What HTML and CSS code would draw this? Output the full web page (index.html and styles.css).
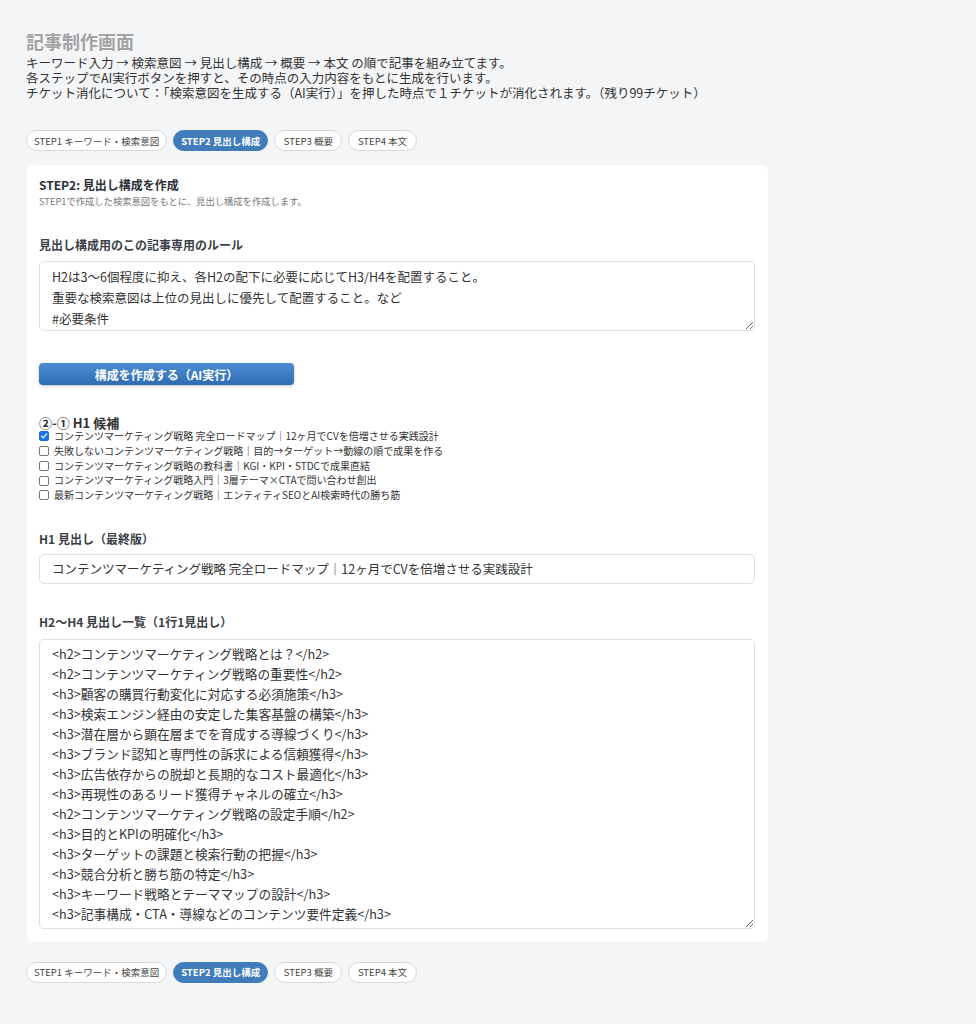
FILE: index.html
```html
<!DOCTYPE html>
<html lang="ja">
<head>
<meta charset="utf-8">
<title>記事制作画面</title>
<link rel="stylesheet" href="styles.css">
</head>
<body>
<div class="page">
  <h1 class="title">記事制作画面</h1>
  <div class="desc">
    <p>キーワード入力 → 検索意図 → 見出し構成 → 概要 → 本文 の順で記事を組み立てます。</p>
    <p>各ステップでAI実行ボタンを押すと、その時点の入力内容をもとに生成を行います。</p>
    <p>チケット消化について：「検索意図を生成する（AI実行）」を押した時点で１チケットが消化されます。（残り99チケット）</p>
  </div>

  <nav class="tabs tabs-top">
    <span class="tab">STEP1 キーワード・検索意図</span>
    <span class="tab active">STEP2 見出し構成</span>
    <span class="tab">STEP3 概要</span>
    <span class="tab">STEP4 本文</span>
  </nav>

  <section class="card">
    <h2 class="card-title">STEP2: 見出し構成を作成</h2>
    <p class="card-sub">STEP1で作成した検索意図をもとに、見出し構成を作成します。</p>

    <label class="label label-rules">見出し構成用のこの記事専用のルール</label>
    <textarea class="ta ta-rules">H2は3〜6個程度に抑え、各H2の配下に必要に応じてH3/H4を配置すること。
重要な検索意図は上位の見出しに優先して配置すること。など
#必要条件
・見出しには必ずキーワードを自然な形で含めること。
・読者の検索意図に沿った順序で構成すること。</textarea>

    <button class="btn">構成を作成する（AI実行）</button>

    <h3 class="cand-title">②-① H1 候補</h3>
    <ul class="cands">
      <li><span class="cb checked"><svg viewBox="0 0 10 10" width="8" height="8"><path d="M1.8 5.2 L4 7.4 L8.3 2.4" fill="none" stroke="#fff" stroke-width="1.6" stroke-linecap="round" stroke-linejoin="round"/></svg></span>コンテンツマーケティング戦略 完全ロードマップ｜12ヶ月でCVを倍増させる実践設計</li>
      <li><span class="cb"></span>失敗しないコンテンツマーケティング戦略｜目的→ターゲット→動線の順で成果を作る</li>
      <li><span class="cb"></span>コンテンツマーケティング戦略の教科書｜KGI・KPI・STDCで成果直結</li>
      <li><span class="cb"></span>コンテンツマーケティング戦略入門｜3層テーマ×CTAで問い合わせ創出</li>
      <li><span class="cb"></span>最新コンテンツマーケティング戦略｜エンティティSEOとAI検索時代の勝ち筋</li>
    </ul>

    <label class="label label-h1">H1 見出し（最終版）</label>
    <input class="inp" type="text" value="コンテンツマーケティング戦略 完全ロードマップ｜12ヶ月でCVを倍増させる実践設計">

    <label class="label label-list">H2〜H4 見出し一覧（1行1見出し）</label>
    <textarea class="ta ta-list">&lt;h2&gt;コンテンツマーケティング戦略とは？&lt;/h2&gt;
&lt;h2&gt;コンテンツマーケティング戦略の重要性&lt;/h2&gt;
&lt;h3&gt;顧客の購買行動変化に対応する必須施策&lt;/h3&gt;
&lt;h3&gt;検索エンジン経由の安定した集客基盤の構築&lt;/h3&gt;
&lt;h3&gt;潜在層から顕在層までを育成する導線づくり&lt;/h3&gt;
&lt;h3&gt;ブランド認知と専門性の訴求による信頼獲得&lt;/h3&gt;
&lt;h3&gt;広告依存からの脱却と長期的なコスト最適化&lt;/h3&gt;
&lt;h3&gt;再現性のあるリード獲得チャネルの確立&lt;/h3&gt;
&lt;h2&gt;コンテンツマーケティング戦略の設定手順&lt;/h2&gt;
&lt;h3&gt;目的とKPIの明確化&lt;/h3&gt;
&lt;h3&gt;ターゲットの課題と検索行動の把握&lt;/h3&gt;
&lt;h3&gt;競合分析と勝ち筋の特定&lt;/h3&gt;
&lt;h3&gt;キーワード戦略とテーママップの設計&lt;/h3&gt;
&lt;h3&gt;記事構成・CTA・導線などのコンテンツ要件定義&lt;/h3&gt;
&lt;h3&gt;運用体制とスケジュールの構築&lt;/h3&gt;
&lt;h3&gt;効果測定と改善サイクルの設計&lt;/h3&gt;</textarea>
  </section>

  <nav class="tabs tabs-bottom">
    <span class="tab">STEP1 キーワード・検索意図</span>
    <span class="tab active">STEP2 見出し構成</span>
    <span class="tab">STEP3 概要</span>
    <span class="tab">STEP4 本文</span>
  </nav>
</div>
</body>
</html>
```

FILE: styles.css
```css
* { box-sizing: border-box; }
html, body {
  margin: 0;
  padding: 0;
  background: #f4f5f7;
}
body {
  font-family: "Noto Sans CJK JP", "Noto Sans", sans-serif;
  color: #333;
}
.page {
  width: 976px;
  padding: 29px 26px 40px 26px;
}
.title {
  margin: 0;
  font-size: 18px;
  line-height: 24px;
  font-weight: 700;
  color: #a3a3a3;
}
.desc {
  margin-top: 2px;
  font-size: 12.5px;
  line-height: 15px;
  color: #333;
}
.desc p { margin: 0; line-height: 15px; }

.tabs {
  display: flex;
  gap: 6px;
}
.tabs-top { margin-top: 30px; }
.tabs-bottom { margin-top: 20px; }
.tab {
  display: inline-flex;
  align-items: center;
  height: 21px;
  padding: 0 7px;
  border: 1px solid #d6d8dc;
  border-radius: 11px;
  background: #fff;
  font-size: 9.5px;
  color: #444;
  white-space: nowrap;
}
.tab:nth-child(3), .tab:nth-child(4) { padding: 0 8.5px; }
.tab.active {
  background: #3f7cb8;
  border-color: #3f7cb8;
  color: #fff;
  font-weight: 700;
}

.card {
  margin-top: 14px;
  width: 741px;
  margin-left: 1px;
  background: #fff;
  border-radius: 6px;
  padding: 12px 12px 13px 12px;
  display: flex;
  flex-direction: column;
}
.card-title {
  margin: 0;
  font-size: 12px;
  line-height: 16px;
  font-weight: 700;
  color: #2d3038;
}
.card-sub {
  margin: 2px 0 0 0;
  font-size: 9.3px;
  line-height: 12px;
  color: #777;
}
.label {
  display: block;
  font-size: 12px;
  line-height: 16px;
  font-weight: 700;
  color: #3b3f48;
  margin-bottom: 8px;
}
.label-rules { margin-top: 30px; }
.label-h1 { margin-top: 28px; margin-bottom: 7px; }
.label-list { margin-top: 30px; margin-bottom: 9px; }

.ta, .inp {
  display: block;
  width: 716px;
  border: 1px solid #dcdee2;
  border-radius: 5px;
  background: #fff;
  font-family: "Noto Sans CJK JP", "Noto Sans", sans-serif;
  font-size: 12.5px;
  color: #333;
  margin: 0;
  outline: none;
}
.ta {
  padding: 4px 12px;
  resize: vertical;
  overflow: auto;
  scrollbar-width: none;
}
.ta-rules { height: 70px; line-height: 21px; }
.ta-list { height: 290px; line-height: 20px; font-size: 12.7px; }
.inp {
  height: 30px;
  padding: 0 12px;
}

.btn {
  margin-top: 32px;
  width: 255px;
  height: 22px;
  border: none;
  border-radius: 4px;
  background: linear-gradient(#4c8ed3, #2f6db3);
  box-shadow: 0 1px 3px rgba(0, 0, 0, 0.25);
  color: #fff;
  font-family: "Noto Sans CJK JP", "Noto Sans", sans-serif;
  font-size: 12px;
  font-weight: 700;
  padding: 0;
  align-self: flex-start;
}

.cand-title {
  margin: 31px 0 0 0;
  font-size: 13px;
  line-height: 13px;
  font-weight: 700;
  color: #333;
}
.cands {
  list-style: none;
  margin: 0;
  padding: 0;
  font-size: 10px;
  line-height: 14.75px;
  color: #333;
}
.cands li {
  display: flex;
  align-items: center;
  white-space: nowrap;
}
.cb {
  display: inline-flex;
  align-items: center;
  justify-content: center;
  width: 10px;
  height: 10px;
  border: 1px solid #767676;
  border-radius: 2px;
  background: #fff;
  margin-right: 5px;
  flex: none;
}
.cb.checked {
  background: #1a73e8;
  border-color: #1a73e8;
}
```
